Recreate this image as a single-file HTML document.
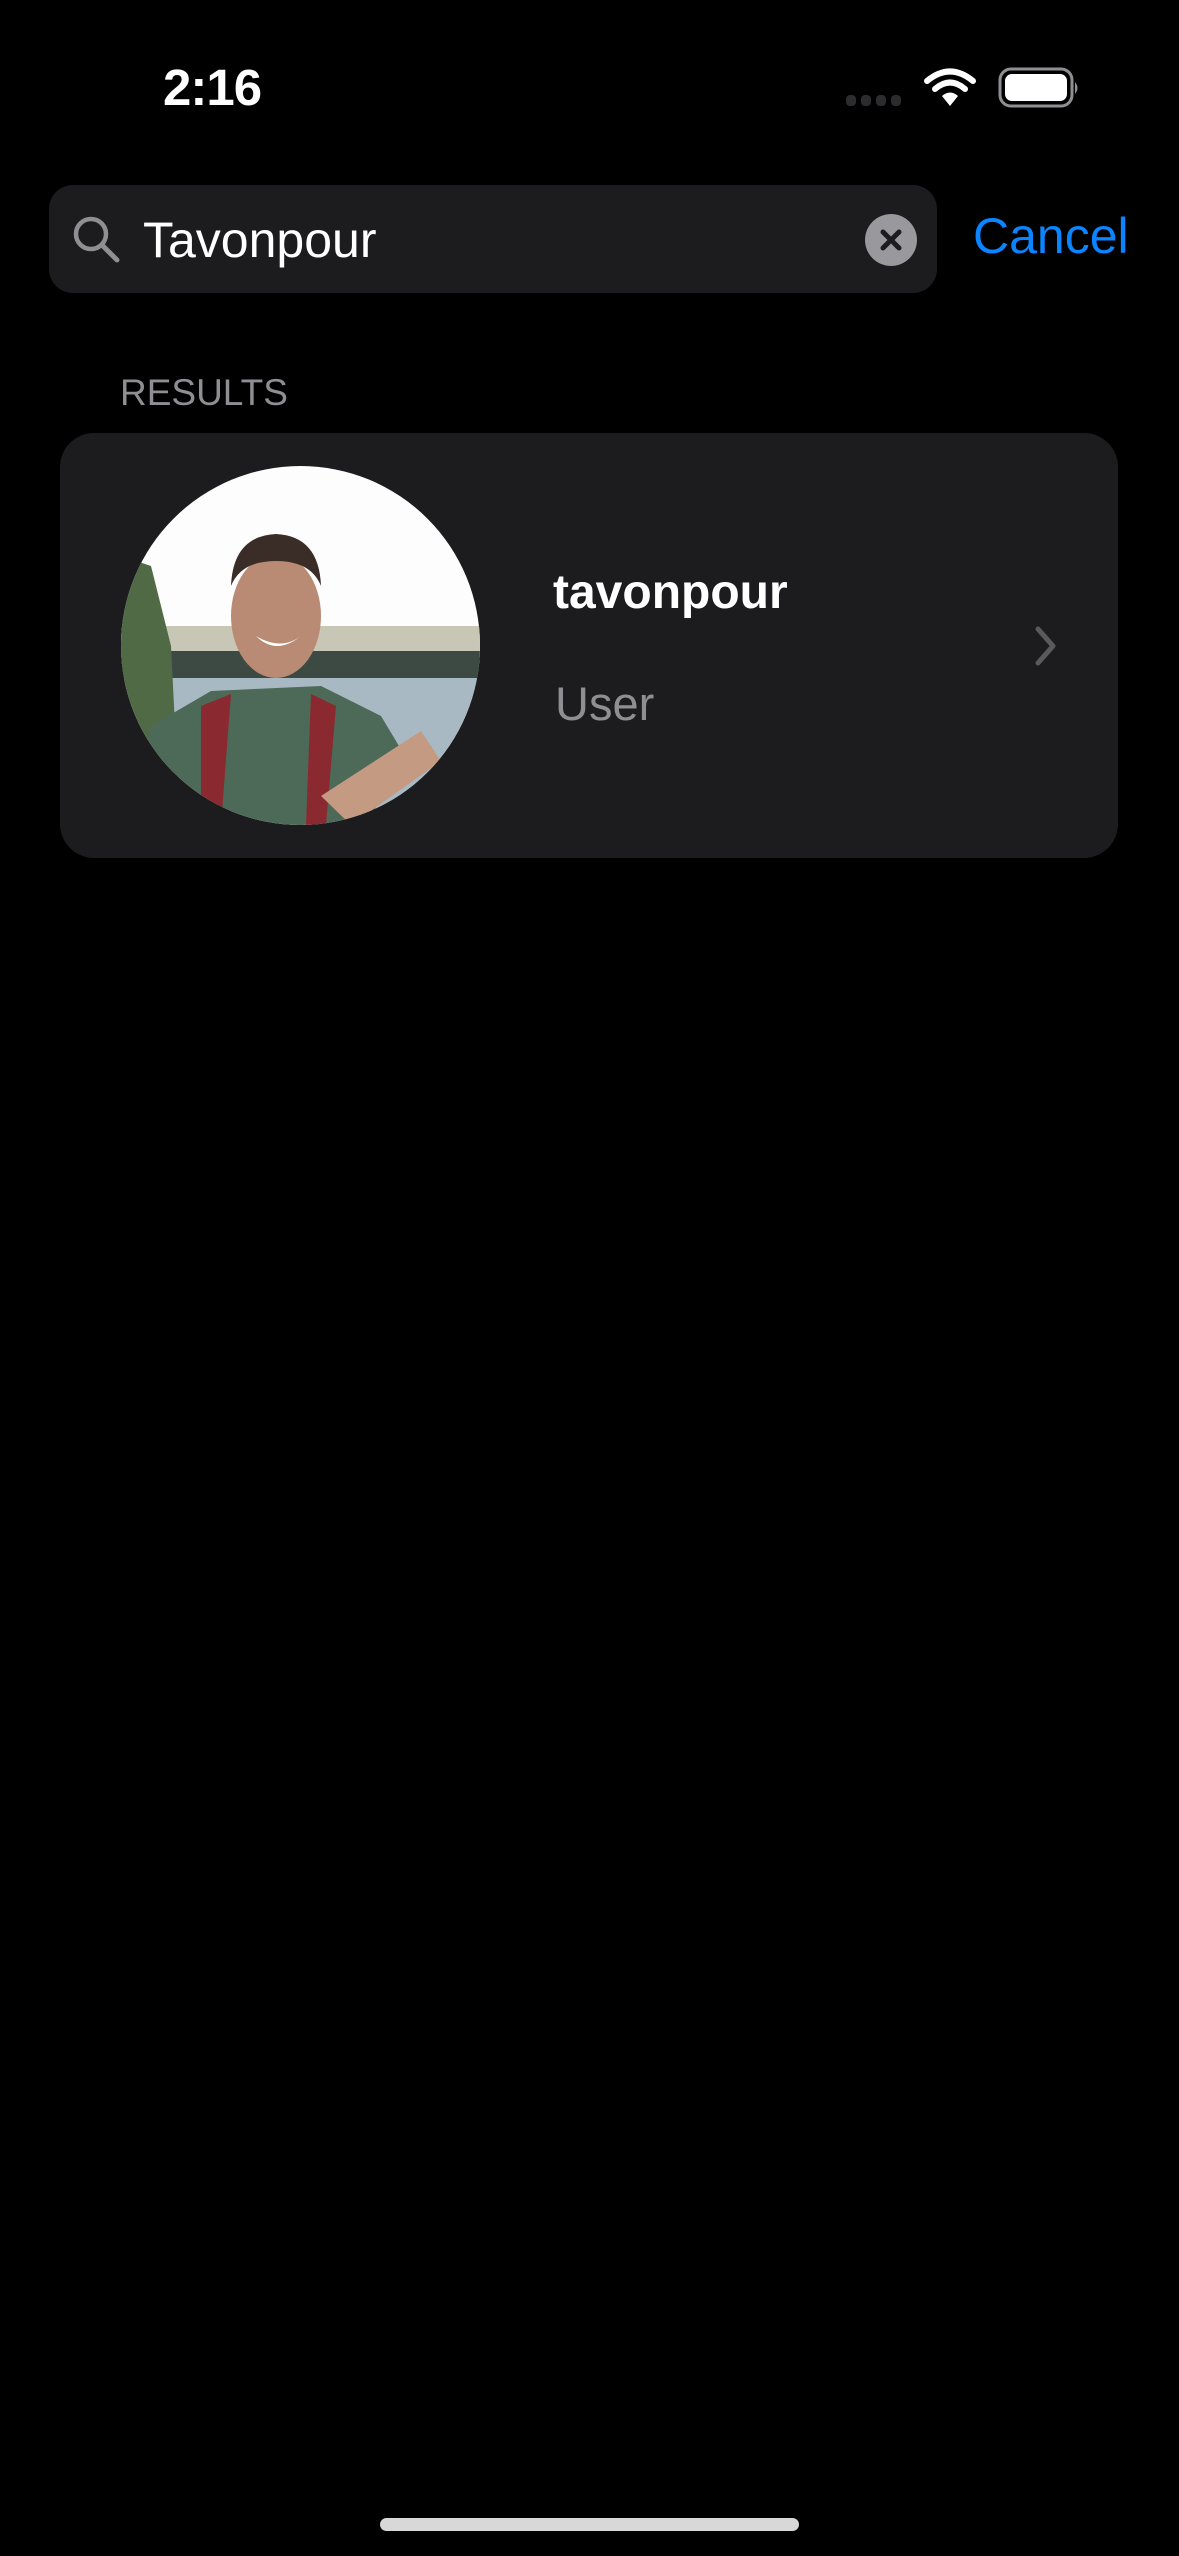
<!DOCTYPE html>
<html><head><meta charset="utf-8"><style>
html,body{margin:0;padding:0;background:#000;}
body{width:1179px;height:2556px;position:relative;overflow:hidden;font-family:"Liberation Sans",sans-serif;}
.a{position:absolute;}
</style></head><body>
<div class="a" style="left:163px;top:58px;font-size:51px;font-weight:bold;color:#fff;letter-spacing:-1px;">2:16</div>
<svg class="a" style="left:844px;top:92px" width="60" height="16"><g fill="#2c2c2e"><rect x="2" y="3" width="10" height="11" rx="4"/><rect x="17" y="3" width="10" height="11" rx="4"/><rect x="32" y="3" width="10" height="11" rx="4"/><rect x="47" y="3" width="10" height="11" rx="4"/></g></svg>
<svg class="a" style="left:922px;top:68px" width="56" height="40" viewBox="0 0 56 40"><g fill="none" stroke="#fff" stroke-width="6" stroke-linecap="round"><path d="M5 13 Q28 -6 51 13"/><path d="M13 21 Q28 8 43 21"/></g><path d="M20 28 Q28 21 36 28 L28 38 Z" fill="#fff"/></svg>
<svg class="a" style="left:998px;top:67px" width="84" height="42"><rect x="2" y="2" width="72" height="37" rx="11" fill="none" stroke="#8e8e93" stroke-width="3"/><rect x="7" y="7" width="62" height="27" rx="7" fill="#fff"/><path d="M77 15 q5 6 0 12" fill="#8e8e93"/></svg>
<div class="a" style="left:49px;top:185px;width:888px;height:108px;border-radius:24px;background:#1c1c1e;"></div>
<svg class="a" style="left:70px;top:213px" width="52" height="52"><circle cx="21" cy="21" r="15" fill="none" stroke="#8e8e93" stroke-width="4.5"/><line x1="32" y1="32" x2="47" y2="47" stroke="#8e8e93" stroke-width="5" stroke-linecap="round"/></svg>
<div class="a" style="left:143px;top:211px;font-size:50px;color:#fff;">Tavonpour</div>
<svg class="a" style="left:865px;top:214px" width="52" height="52"><circle cx="26" cy="26" r="26" fill="#98989d"/><g stroke="#1c1c1e" stroke-width="5" stroke-linecap="round"><line x1="18" y1="18" x2="34" y2="34"/><line x1="34" y1="18" x2="18" y2="34"/></g></svg>
<div class="a" style="left:973px;top:207px;font-size:50px;color:#0a84ff;">Cancel</div>
<div class="a" style="left:120px;top:372px;font-size:37px;color:#8e8e93;">RESULTS</div>
<div class="a" style="left:60px;top:433px;width:1058px;height:425px;border-radius:34px;background:#1c1c1e;"></div>
<svg class="a" style="left:121px;top:466px" width="359" height="359" viewBox="0 0 359 359">
<defs><clipPath id="c"><circle cx="179.5" cy="179.5" r="179.5"/></clipPath></defs>
<g clip-path="url(#c)">
<rect width="359" height="359" fill="#fdfdfd"/>
<rect y="160" width="359" height="40" fill="#c8c6b4"/>
<rect y="185" width="359" height="30" fill="#3d4a44"/>
<rect y="212" width="359" height="147" fill="#a9b9c4"/>
<path d="M0 90 L30 100 L50 180 L55 280 L0 300Z" fill="#4f6a45"/>
<path d="M10 359 L30 260 L90 225 L200 220 L260 250 L290 300 L240 359Z" fill="#4d6a58"/>
<path d="M80 240 L110 228 L100 359 L80 359Z" fill="#8a2a30"/>
<path d="M190 228 L215 240 L205 359 L185 359Z" fill="#8a2a30"/>
<ellipse cx="155" cy="150" rx="45" ry="62" fill="#b98a74"/>
<path d="M110 120 Q112 70 155 68 Q198 70 200 120 Q190 95 155 95 Q120 95 110 120Z" fill="#3a2c26"/>
<path d="M135 170 Q155 190 180 170 Q160 185 135 170Z" fill="#fff"/>
<path d="M200 330 L300 265 L320 295 L230 359Z" fill="#c49a82"/>
</g></svg>
<div class="a" style="left:553px;top:565px;font-size:48px;font-weight:bold;color:#fff;">tavonpour</div>
<div class="a" style="left:555px;top:676px;font-size:47px;color:#8e8e93;">User</div>
<svg class="a" style="left:1030px;top:624px" width="32" height="44"><path d="M8 5 L23 22 L8 39" fill="none" stroke="#5a5a5e" stroke-width="5" stroke-linecap="round" stroke-linejoin="round"/></svg>
<div class="a" style="left:380px;top:2518px;width:419px;height:13px;border-radius:7px;background:#d8d8d8;"></div>
</body></html>
